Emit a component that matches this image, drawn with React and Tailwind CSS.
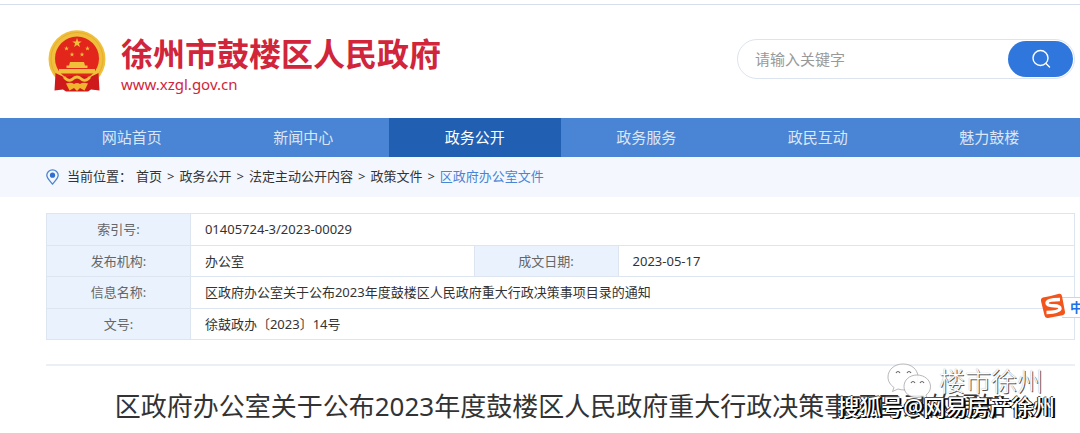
import { useState } from "react";

const navItems = ["网站首页", "新闻中心", "政务公开", "政务服务", "政民互动", "魅力鼓楼"];

const crumbs = ["首页", "政务公开", "法定主动公开内容", "政策文件"];

const STAR = "M0 -1 L0.24 -0.32 L0.95 -0.31 L0.38 0.12 L0.59 0.81 L0 0.4 L-0.59 0.81 L-0.38 0.12 L-0.95 -0.31 L-0.24 -0.32 Z";

function Emblem() {
  return (
    <svg viewBox="0 0 58 62" className="w-[58px] h-[62px] shrink-0" aria-hidden="true">
      <ellipse cx="29" cy="29" rx="28.5" ry="28.8" fill="#f0bf3c" />
      <ellipse cx="29" cy="29" rx="26" ry="26.500" fill="none" stroke="#e2a92c" strokeWidth="0.8" />
      <circle cx="29" cy="28.5" r="22" fill="#e2261c" />
      <g fill="#f0c03a">
        <path d={STAR} transform="translate(29 13) scale(5)" />
        <path d={STAR} transform="translate(18.5 18.500) scale(2.5)" />
        <path d={STAR} transform="translate(39.5 18.500) scale(2.5)" />
        <path d={STAR} transform="translate(24 24.500) scale(2.5)" />
        <path d={STAR} transform="translate(34 24.500) scale(2.5)" />
        {/* gate tower */}
        <path d="M22 32 h14 l1 3.5 h2.500 v2.500 h-21 v-2.500 h2.500 Z" />
        <path d="M11 39 h36 v4.500 h-36 Z" />
      </g>
      <path d="M7.5 43 Q13 45.500 17 48 Q23 44.500 29 46.500 Q35 44.500 41 48 Q45 45.500 50.5 43 L51.500 60.500 L43 59.500 L40 61.500 H18 L15 59.500 L6.500 60.500 Z" fill="#cf1a1c" />
      <path d="M16 47 Q20 52 24 49.500 Q29 44.500 34 49.500 Q38 52 42 47" fill="none" stroke="#f0c03a" strokeWidth="2.8" />
      <path d="M18 53.500 Q23 52 26 54 Q29 52 32 54 Q35 52 40 53.500 L36.500 60.500 L32 58 L29 61 L26 58 L21.500 60.500 Z" fill="#f0b52c" />
    </svg>
  );
}

function Header({ keyword, setKeyword }) {
  return (
    <header className="flex items-start justify-between h-[114px] pt-[25px] pl-12 pr-[5px] border-t border-[#d5dfec]">
      <div className="flex gap-[15px]">
        <Emblem />
        <div className="text-[#d0253a] pt-1">
          <h1 className="text-[32px] leading-10 font-bold whitespace-nowrap">徐州市鼓楼区人民政府</h1>
          <a href="#" className="block text-[15px] leading-5">www.xzgl.gov.cn</a>
        </div>
      </div>
      <form
        onSubmit={(e) => e.preventDefault()}
        className="flex items-center w-[338px] h-10 mt-[9px] p-px rounded-full border border-[#dce4ef]"
      >
        <input
          type="text"
          aria-label="请输入关键字"
          placeholder="请输入关键字"
          value={keyword}
          onChange={(e) => setKeyword(e.target.value)}
          className="flex-1 min-w-0 h-full pl-4 text-[15px] bg-transparent outline-none placeholder:text-[#999]"
        />
        <button type="submit" aria-label="搜索" className="flex items-center justify-center w-[65px] h-9 rounded-full bg-[#2f77dc] text-white">
          <svg viewBox="0 0 20 20" className="w-5 h-5" fill="none" stroke="currentColor" strokeWidth="1.4">
            <circle cx="9.5" cy="9" r="7.5" />
            <path d="M15 14.5 L18.5 18" strokeLinecap="round" />
          </svg>
        </button>
      </form>
    </header>
  );
}

function NavBar() {
  return (
    <nav className="flex pl-[46px] pr-[5px] bg-[#4a84d4]">
      {navItems.map((item) => (
        <a
          key={item}
          href="#"
          className={`flex-1 text-center text-[15px] leading-[39px] ${
            item === "政务公开" ? "bg-[#215fb2] text-white" : "text-[#dbe6f6]"
          }`}
        >
          {item}
        </a>
      ))}
    </nav>
  );
}

function Breadcrumb() {
  return (
    <div className="flex items-center h-10 pl-[46px] bg-[#f4f8fe] text-[13px] text-[#333] whitespace-nowrap">
      <svg viewBox="0 0 13 16" className="w-[13px] h-4 mr-2" fill="none" aria-hidden="true">
        <path d="M6.5 15 C4 11.8 0.8 9.3 0.8 6.3 a5.7 5.5 0 0 1 11.4 0 C12.2 9.3 9 11.8 6.5 15 Z" stroke="#4a84d4" strokeWidth="1.3" />
        <circle cx="6.5" cy="6.2" r="2.6" fill="#2f6fd0" />
      </svg>
      <span className="mr-1">当前位置：</span>
      {crumbs.map((c) => (
        <span key={c}>
          <a href="#">{c}</a>
          <span className="mx-[5px]">&gt;</span>
        </span>
      ))}
      <a href="#" className="text-[#4a84d4]">区政府办公室文件</a>
    </div>
  );
}

function Label({ children }) {
  return <th scope="row" className="border border-[#dde6f0] bg-[#eaf3fd] font-normal text-center text-[#666]">{children}</th>;
}

function Value({ children, span }) {
  return <td colSpan={span} className="border border-[#dde6f0] pl-[14px]">{children}</td>;
}

function InfoTable() {
  return (
    <table className="w-full h-[127px] table-fixed border-collapse text-[13px] leading-[30px] text-[#333]">
      <colgroup>
        <col className="w-[14%]" />
        <col className="w-[27.6%]" />
        <col className="w-[14%]" />
        <col />
      </colgroup>
      <tbody>
        <tr>
          <Label>索引号:</Label>
          <Value span={3}>01405724-3/2023-00029</Value>
        </tr>
        <tr>
          <Label>发布机构:</Label>
          <Value>办公室</Value>
          <Label>成文日期:</Label>
          <Value>2023-05-17</Value>
        </tr>
        <tr>
          <Label>信息名称:</Label>
          <Value span={3}>区政府办公室关于公布2023年度鼓楼区人民政府重大行政决策事项目录的通知</Value>
        </tr>
        <tr>
          <Label>文号:</Label>
          <Value span={3}>徐鼓政办〔2023〕14号</Value>
        </tr>
      </tbody>
    </table>
  );
}

function ImeBadge() {
  return (
    <div className="absolute right-0 top-[293px] flex items-center">
      <svg viewBox="0 0 26 26" className="relative z-10 w-[26px] h-[26px] -mr-1" aria-hidden="true">
        <path d="M3 4.5 Q12 3 19 0.8 Q21.500 0.500 22 3 L25 19 Q25.200 21.500 22.500 22.200 L8 25 Q5.200 25.200 4.500 22.500 L1 8 Q0.600 5.300 3 4.500 Z" fill="#f2541b" />
        <path d="M20 6.500 Q7 6.500 7 10 Q7 12.500 13.500 12.800 Q20 13 20 15.500 Q19.500 19 6.500 19.500" fill="none" stroke="#fff" strokeWidth="3.4" />
      </svg>
      <span className="w-[18px] h-[21px] mt-[3px] overflow-hidden border-y border-[#c9d6ea] bg-white pl-2 text-[13px] leading-[19px] font-bold text-[#1b72e8] whitespace-nowrap">
        中
      </span>
    </div>
  );
}

function Watermarks() {
  return (
    <div className="absolute right-5 -top-1 flex flex-col items-end whitespace-nowrap">
      <div className="flex items-center gap-2 mr-3 h-[38px]">
        <svg viewBox="0 0 44 36" className="w-11 h-9" fill="#fff" fillOpacity="0.9" stroke="#999" strokeWidth="0.7" aria-hidden="true">
          <path d="M16 1 C7 1 1 7 1 14 C1 18.500 3.500 22 7 24.500 L5.500 28.500 L11 26 Q14 27 18 27 C26 27 31 21 31 14 C31 7 25 1 16 1 Z" />
          <path d="M30 12 C22.500 12 17 17 17 23.500 C17 30 22.500 34.500 30 34.500 Q33 34.500 35.500 33.500 L40 35.500 L39 32 C42 30 43.500 27 43.500 23.500 C43.500 17 37.500 12 30 12 Z" />
          <path d="M9 10 q2 -3 4 0 M20 10 q2 -3 4 0 M24 20 q2 -3 4 0 M33 20 q2 -3 4 0" fill="none" stroke="#666" strokeWidth="1.200" />
        </svg>
        <span className="text-[26px] leading-[38px] font-light text-white [text-shadow:1px_1px_0_#555,0_0_1px_#999]">楼市徐州</span>
      </div>
      <span className="text-[22px] leading-7 font-medium text-white -mt-2 [text-shadow:1px_1px_0_#000,2px_1px_0_#000,-1px_0_0_#222,0_-1px_0_#555]">
        搜狐号@网易房产徐州
      </span>
    </div>
  );
}

export default function App() {
  const [keyword, setKeyword] = useState("");

  return (
    <div className="relative overflow-hidden bg-white pt-1 pb-3 font-['Noto_Sans','Noto_Sans_CJK_SC',sans-serif]">
      <Header keyword={keyword} setKeyword={setKeyword} />
      <NavBar />
      <Breadcrumb />

      <main className="pt-4 pl-[46px] pr-[5px]">
        <InfoTable />
        <div className="relative mt-6 border-t-2 border-[#ebf0f5] pt-5">
          <h2 className="text-center text-[26px] leading-10 text-[#333] whitespace-nowrap">
            区政府办公室关于公布2023年度鼓楼区人民政府重大行政决策事项目录的通知
          </h2>
          <Watermarks />
        </div>
      </main>

      <ImeBadge />
    </div>
  );
}
